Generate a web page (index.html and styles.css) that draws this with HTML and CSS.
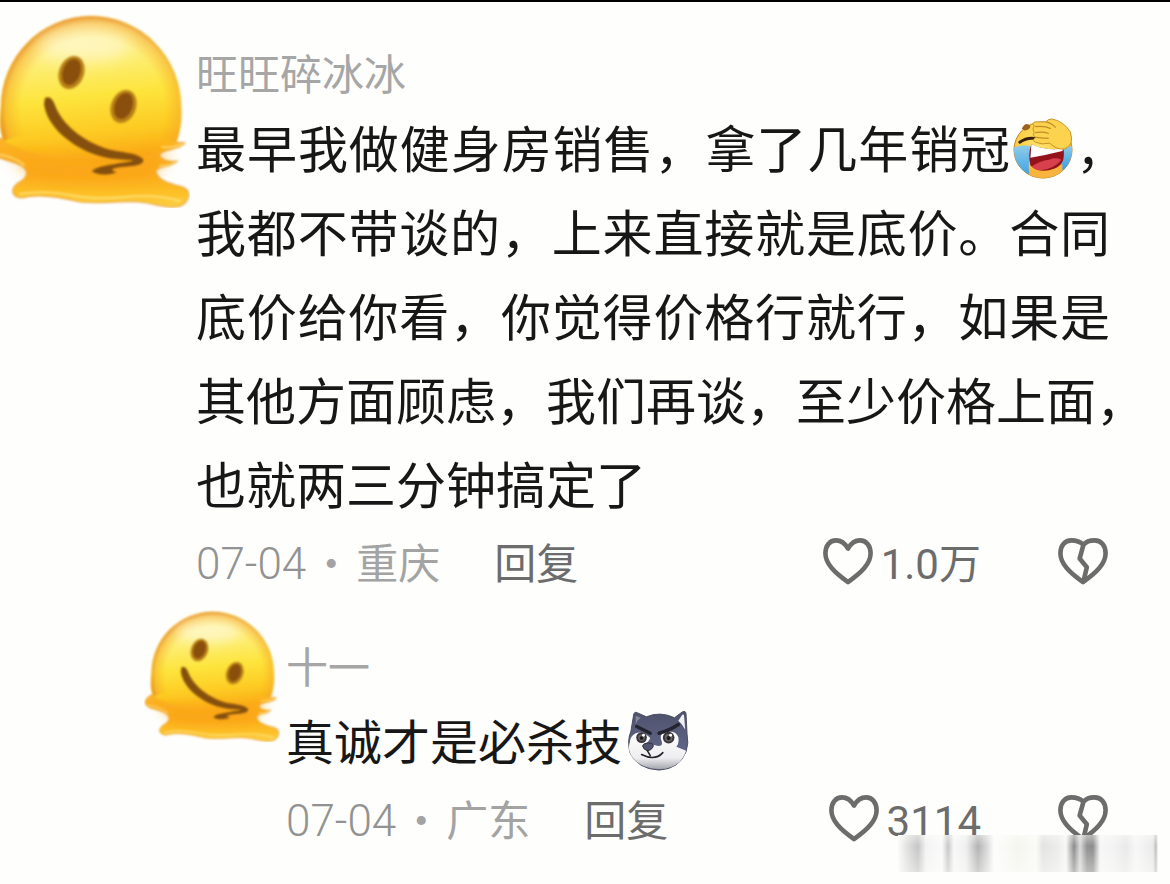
FILE: index.html
```html
<!DOCTYPE html>
<html lang="zh-CN">
<head>
<meta charset="utf-8">
<meta name="viewport" content="width=device-width, initial-scale=1">
<title>评论</title>
<link rel="stylesheet" href="styles.css">
</head>
<body>
<svg class="defs" aria-hidden="true">
  <defs>
    <linearGradient id="face" x1="0.42" y1="0" x2="0.55" y2="1">
      <stop offset="0" stop-color="#fef3b0"/><stop offset="0.25" stop-color="#fdf083"/><stop offset="0.55" stop-color="#fde43c"/><stop offset="0.8" stop-color="#fdc922"/><stop offset="1" stop-color="#fba516"/>
    </linearGradient>
    <radialGradient id="rim" gradientUnits="userSpaceOnUse" cx="93" cy="110" r="95">
      <stop offset="0.76" stop-color="#f8a81c" stop-opacity="0"/><stop offset="0.91" stop-color="#f5a628" stop-opacity="0.5"/><stop offset="1" stop-color="#e2861a" stop-opacity="0.95"/>
    </radialGradient>
    <linearGradient id="puddle" x1="0" y1="0" x2="0" y2="1">
      <stop offset="0" stop-color="#fbb428"/><stop offset="0.5" stop-color="#fca91a"/><stop offset="0.8" stop-color="#fdc028"/><stop offset="1" stop-color="#fbcf42"/>
    </linearGradient>
    <filter id="soft" x="-20%" y="-20%" width="140%" height="140%"><feGaussianBlur stdDeviation="1.2"/></filter>
    <filter id="softer" x="-40%" y="-60%" width="180%" height="220%"><feGaussianBlur stdDeviation="8"/></filter>
    <symbol id="melting" viewBox="-10 12 200 196">
      <path d="M1 138C-6 142 -11 148 -7 154C-2 160 12 160 22 166C30 172 27 178 18 183C10 189 11 197 22 198C38 193 60 197 80 202C105 205 125 199 147 203C162 206 176 210 184 204C191 197 190 190 183 187C172 184 158 181 156 172C156 165 171 168 177 161C170 162 160 160 160 155C160 149 179 151 185 143C178 141 170 144 160 142Z" fill="url(#puddle)" stroke="#e9a94a" stroke-width="1.2" filter="url(#soft)"/>
      <path d="M4 141C-1 128 0 118 1 107A90 91 0 0 1 181 107C182 120 180 132 176 143C150 158 120 164 92 163C55 161 24 153 4 141Z" fill="url(#face)" filter="url(#soft)"/>
      <path d="M4 141C-1 128 0 118 1 107A90 91 0 0 1 181 107C182 120 180 132 176 143C150 128 30 128 4 141Z" fill="url(#rim)" filter="url(#soft)"/>
      <ellipse cx="84" cy="46" rx="46" ry="16" fill="#fffbe4" opacity="0.55" filter="url(#softer)"/>
      <path d="M8 150Q85 172 170 150L150 176Q85 188 35 176Z" fill="#fba617" opacity="0.8" filter="url(#softer)"/>
      <path d="M-5 154Q13 156 24 165M20 194Q46 190 70 195T125 197T180 201M162 147Q174 148 183 144M160 166Q170 166 176 162" fill="none" stroke="#fff2a5" stroke-width="2" stroke-linecap="round" opacity="0.55" filter="url(#soft)"/>
      <g filter="url(#soft)">
        <ellipse cx="71.500" cy="72.500" rx="12.500" ry="17" transform="rotate(20 71.500 72.500)" fill="#b98018"/>
        <ellipse cx="71.500" cy="72" rx="9" ry="13.500" transform="rotate(20 71.500 72)" fill="#8a4f0a"/>
        <ellipse cx="123.500" cy="106.500" rx="12.500" ry="17" transform="rotate(20 123.500 106.500)" fill="#b98018"/>
        <ellipse cx="123.500" cy="106" rx="9" ry="13.500" transform="rotate(20 123.500 106)" fill="#8a4f0a"/>
        <path d="M45 98C52 95 54 103 57 110C66 128 86 142 107 149C121 153 136 152 143 159C145 166 132 166 121 167C113 168 108 170 117 172C108 176 96 175 92 171C97 166 111 165 120 163C126 162 131 162 133 160C117 160 104 158 91 153C69 144 47 126 44 104Z" fill="#855008"/>
      </g>
    </symbol>
    <symbol id="heart" viewBox="0 0 56 52">
      <path d="M28 13C24 6 19 4.500 15.500 4.500C9 4.500 4.500 10 4.500 18C4.500 29 14 38 28 48C42 38 51.500 29 51.500 18C51.500 10 47 4.500 40.500 4.500C37 4.500 32 6 28 13Z" fill="none" stroke="currentColor" stroke-width="4.800" stroke-linejoin="round"/>
    </symbol>
    <symbol id="broken" viewBox="0 0 56 52">
      <path d="M28.500 9C24 5 20 4.500 16 4.500C9 4.500 4.500 10 4.500 18C4.500 29 14 38 28 48C42 38 51.500 29 51.500 18C51.500 10 47 4.500 40 4.500C35 4.500 31 6 28.500 9L24.500 23.500L32 32.500L28.500 47" fill="none" stroke="currentColor" stroke-width="4.800" stroke-linejoin="round"/>
    </symbol>
  </defs>
</svg>

<main class="thread">
  <article class="comment">
    <svg class="avatar" role="img" aria-label="头像"><use href="#melting"/></svg>
    <div class="content">
      <a class="name" href="#">旺旺碎冰冰</a>
      <p class="text">
        <span class="line full hang">最早我做健身房销售，拿了几年销冠<svg class="emoji" viewBox="0 0 64 64" role="img" aria-label="捂脸笑哭"><defs><radialGradient id="laugh" cx=".45" cy=".35" r=".65"><stop offset="0" stop-color="#ffe46e"/><stop offset=".7" stop-color="#fcc93c"/><stop offset="1" stop-color="#ee9a2a"/></radialGradient><linearGradient id="tear" x1="0" y1="0" x2="0" y2="1"><stop offset="0" stop-color="#8fcbe8"/><stop offset="1" stop-color="#2f9be6"/></linearGradient><clipPath id="ball"><ellipse cx="32" cy="33" rx="30" ry="29"/></clipPath></defs>
          <ellipse cx="32" cy="33" rx="30" ry="29" fill="url(#laugh)" stroke="#b98420" stroke-width="1"/>
          <g clip-path="url(#ball)"><path d="M0 31Q12 27 20 29Q16 43 18 65L0 60Z" fill="url(#tear)"/><path d="M50 35Q56 29 65 28V50L52 56Z" fill="url(#tear)"/><path d="M18 55Q36 60 52 48V65H18Z" fill="#f9b440"/></g>
          <path d="M20 27Q38 35 53 31Q56 48 44 52Q29 58 19 49Q16 38 20 27Z" fill="#94131a"/><path d="M20 27Q39 35 53 31L52 34Q36 38 19 41Z" fill="#fff"/><path d="M20 50Q29 44 38 43Q46 40 51 43Q44 52 30 54Q24 54 20 50Z" fill="#d9404e"/>
          <path d="M10 11Q14 3 19 8Q19 12 13 13" fill="#9a641e"/><path d="M8 25Q15 20 23 21" fill="none" stroke="#3b210d" stroke-width="3" stroke-linecap="round"/>
          <path d="M23 8Q20 5 24 4L35 4Q37 1 41 1Q53 3 60 14Q65 28 54 32Q46 33 39 26Q31 28 24 25Q20 22 25 20Q20 18 23 15Q20 11 23 8Z" fill="#fbd34e" stroke="#c7902a" stroke-width="1"/><path d="M24 9Q34 8 40 11M24 15Q33 14 38 16M25 20Q33 21 38 21M35 4Q42 6 45 10" fill="none" stroke="#c48b26" stroke-width="1.300"/>
        </svg>，</span>
        <span class="line full">我都不带谈的，上来直接就是底价。合同</span>
        <span class="line full">底价给你看，你觉得价格行就行，如果是</span>
        <span class="line">其他方面顾虑，我们再谈，至少价格上面，</span>
        <span class="line">也就两三分钟搞定了</span>
      </p>
      <footer class="meta">
        <span><time class="digits">07-04</time></span><span class="dot">·</span><span>重庆</span>
        <button class="reply-button" type="button">回复</button>
        <button class="like" type="button" aria-label="赞 1.0万"><svg class="icon"><use href="#heart"/></svg><span><span class="digits">1.0</span>万</span></button>
        <button class="dislike" type="button" aria-label="踩"><svg class="icon"><use href="#broken"/></svg></button>
      </footer>
    </div>
  </article>

  <article class="comment reply">
    <svg class="avatar" role="img" aria-label="头像"><use href="#melting"/></svg>
    <div class="content">
      <a class="name" href="#">十一</a>
      <p class="text">
        <span class="line">真诚才是必杀技<svg class="emoji" viewBox="0 0 64 64" role="img" aria-label="哈士奇"><defs><linearGradient id="fur" x1="0" y1="0" x2="0" y2="1"><stop offset="0" stop-color="#4f526b"/><stop offset=".6" stop-color="#5e6386"/></linearGradient><linearGradient id="muzzle" x1="0" y1="0" x2="0" y2="1"><stop offset="0" stop-color="#fff"/><stop offset=".7" stop-color="#eeeef0"/><stop offset="1" stop-color="#a6a7ae"/></linearGradient></defs>
          <path d="M4 22L7 4Q8 1 11 3L20 7Q34 1 49 8L57 2Q61 0 61 5L62 25Q64 34 61 43Q54 61 33 62Q11 61 3 44Q0 31 4 22Z" fill="url(#fur)" stroke="#4b4d60" stroke-width="1"/>
          <path d="M53 11L57 5Q59 4 59 7L60 20Q57 14 53 11Z" fill="#f1f0f4"/><path d="M9 6L14 8Q10 11 9 15Z" fill="#85879a"/>
          <path d="M3 33Q3 27 9 24Q17 21 24 29Q22 34 18 35Q26 35 31 37Q37 38 36 33Q32 24 41 23Q50 21 53 28Q54 35 51 38L61 42Q55 61 33 61Q10 60 3 44Q1 39 3 33Z" fill="url(#muzzle)"/>
          <circle cx="15" cy="28.500" r="5.500" fill="#35343a"/><circle cx="43" cy="28.500" r="6" fill="#35343a"/><circle cx="15" cy="28.500" r="3.500" fill="#6b6465"/><circle cx="43" cy="28.500" r="4" fill="#6b6465"/><circle cx="15" cy="29" r="2" fill="#1d1c20"/><circle cx="43" cy="29" r="2.200" fill="#1d1c20"/><circle cx="17" cy="26" r="1.500" fill="#fff"/><circle cx="45" cy="26" r="1.500" fill="#fff"/>
          <path d="M10 17L24 24M33 24Q44 21 53 15" fill="none" stroke="#24242f" stroke-width="3.500" stroke-linecap="round"/>
          <path d="M16 37Q17 34 22 34Q28 34 27 38Q25 42 21 42Q17 41 16 37Z" fill="#53556f" stroke="#30303d"/><path d="M21 42L24 47M15 46Q29 53 37 44" fill="none" stroke="#202027" stroke-width="1.600" stroke-linecap="round"/>
        </svg></span>
      </p>
      <footer class="meta">
        <span><time class="digits">07-04</time></span><span class="dot">·</span><span>广东</span>
        <button class="reply-button" type="button">回复</button>
        <button class="like" type="button" aria-label="赞 3114"><svg class="icon"><use href="#heart"/></svg><span><span class="digits">3114</span></span></button>
        <button class="dislike" type="button" aria-label="踩"><svg class="icon"><use href="#broken"/></svg></button>
      </footer>
    </div>
  </article>
  <div class="smudge" aria-hidden="true"></div>
</main>
</body>
</html>
```

FILE: styles.css
```css
* { box-sizing: border-box; }

body {
  margin: 0;
  background: #fefefc;
  color: #171717;
  font-family: "Noto Sans CJK SC", "Noto Sans", sans-serif;
  overflow-x: hidden;
}

.defs { position: absolute; width: 0; height: 0; }

.thread {
  position: relative;
  min-height: 100vh;
  border-top: 2px solid #000;
  padding: 10px 60px 0 0;
  overflow: hidden;
}

.comment { display: flex; align-items: flex-start; }

.avatar {
  flex: none;
  width: 200px;
  height: 196px;
  margin-left: -10px;
}

.content {
  flex: 1;
  min-width: 0;
  padding: 30px 0 0 6px;
}

.name {
  display: block;
  margin-bottom: 2px;
  color: #a6a6a6;
  font-size: 42px;
  line-height: 60px;
  text-decoration: none;
}

.text {
  margin: 0;
  font-size: 50px;
  line-height: 84px;
}

.line { display: block; white-space: nowrap; }
.full { text-align: justify; text-align-last: justify; white-space: normal; }
.hang { margin-right: -16px; }

.emoji {
  display: inline-block;
  width: 64px;
  height: 62px;
  vertical-align: -12px;
}

.meta {
  display: flex;
  align-items: center;
  height: 74px;
  color: #a3a3a3;
  font-size: 42px;
  line-height: 60px;
}

.digits {
  font-family: Roboto, sans-serif;
  font-size: 44px;
  line-height: 1;
}

time { font-weight: 300; color: #929292; }

.dot { width: 50px; text-align: center; }

button {
  border: 0;
  padding: 0;
  background: none;
  color: #6c6c6c;
  font: inherit;
  cursor: pointer;
}

.reply-button { margin-left: 54px; }

.like {
  display: flex;
  align-items: center;
  gap: 6px;
  margin-left: auto;
}

.like .digits { font-size: 42px; }

.dislike { display: flex; margin-left: 75px; }
.icon { width: 54px; height: 50px; }

.reply { margin-top: 11px; padding-left: 144px; }
.reply .avatar { width: 136px; height: 133px; margin-left: 0; }
.reply .content { padding: 26px 0 0 6px; }
.reply .text { font-size: 48px; }
.reply .emoji { margin-left: 4px; }

.smudge {
  position: absolute;
  right: 12px;
  bottom: 12px;
  width: 260px;
  height: 37px;
  background:
    linear-gradient(#fefefb66, #fefefb00 30%, #fefefb66),
    linear-gradient(90deg, #fbfbf9 0, #d9d9d9 12px, #c6c6c6 20px, #f3f3f3 28px, #fafafa 44px, #c8c8c8 50px, #f8f8f8 56px, #efefef 68px, #b3b3b3 80px, #dedede 90px, #fdfdfb 96px, #f5f5ef 120px, #fafaf7 138px, #e3e3e1 145px, #ececea 160px, #f7f7f7 168px, #8b8b8b 176px, #dadada 182px, #919191 189px, #8d8d8d 195px, #f6f6f6 202px, #f3f3f3 215px, #e9e9e9 228px, #f7f7f7 238px, #eaeaea 255px, #bdbdbd 258px, #fbfbfb 260px);
}
```
